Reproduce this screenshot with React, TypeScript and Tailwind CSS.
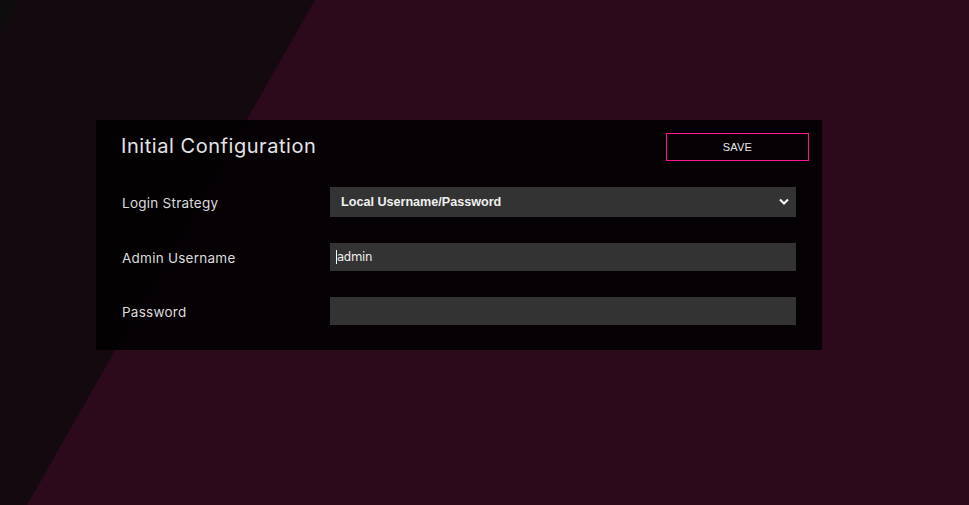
import React from 'react';

const labelFont = { fontFamily: 'Inter, "Open Sans", sans-serif' };

export default function App() {
  return (
    <div className="relative min-h-screen w-full overflow-hidden bg-[#2c0a1c]">
      {/* diagonal background bands */}
      <div className="absolute inset-0 bg-[#150910] [clip-path:polygon(0_0,315px_0,27px_505px,0_505px)]" />
      <div className="absolute inset-0 bg-[#0f0c0e] [clip-path:polygon(0_0,20px_0,0_36px)]" />

      <div className="relative pt-[120px] pl-[96px]">
        <div className="w-[726px] h-[230px] bg-black/[0.85] pt-[13px] pl-[25px] pr-[13px]" style={labelFont}>
          <div className="flex items-center justify-between h-[28px]">
            <h1 className="text-[20px] text-[#e4e4e4] tracking-[0.55px] font-normal leading-none pb-[2px]">Initial Configuration</h1>
            <button className="w-[143px] h-[28px] border border-[#ff1493] text-[11px] text-[#e8e8e8] font-['Liberation_Sans',Arial,sans-serif] tracking-[0.2px]">
              SAVE
            </button>
          </div>

          <div className="flex flex-col gap-[26px] mt-[26px] pr-[13px]">
            <div className="flex items-center">
              <label className="w-[209px] pl-[1px] pt-[2px] text-[13.5px] text-[#dcdcdc] tracking-[0.25px]">Login Strategy</label>
              <div className="relative w-[466px] h-[30px] bg-[#333333] flex items-center">
                <span className="pl-[11px] text-[12.6px] font-bold text-[#f0f0f0] font-['Liberation_Sans',Arial,sans-serif]">Local Username/Password</span>
                <svg className="absolute right-[7px] top-[11px] w-[10px] h-[8px]" viewBox="0 0 10 8">
                  <path d="M1 1.5 L5 5.5 L9 1.5" stroke="#f2f2f2" strokeWidth="2.2" fill="none" />
                </svg>
              </div>
            </div>

            <div className="flex items-center">
              <label className="w-[209px] pl-[1px] pt-[2px] text-[13.5px] text-[#dcdcdc] tracking-[0.25px]">Admin Username</label>
              <div className="w-[466px] h-[28px] bg-[#333333] flex items-center pl-[6px]">
                <span className="w-px h-[14px] bg-white" />
                <span className="text-[13px] text-[#f0f0f0] font-['DejaVu_Sans_Condensed','DejaVu_Sans',sans-serif] tracking-[-0.3px]">admin</span>
              </div>
            </div>

            <div className="flex items-center">
              <label className="w-[209px] pl-[1px] pt-[2px] text-[13.5px] text-[#dcdcdc] tracking-[0.25px]">Password</label>
              <div className="w-[466px] h-[28px] bg-[#333333]" />
            </div>
          </div>
        </div>
      </div>
    </div>
  );
}
